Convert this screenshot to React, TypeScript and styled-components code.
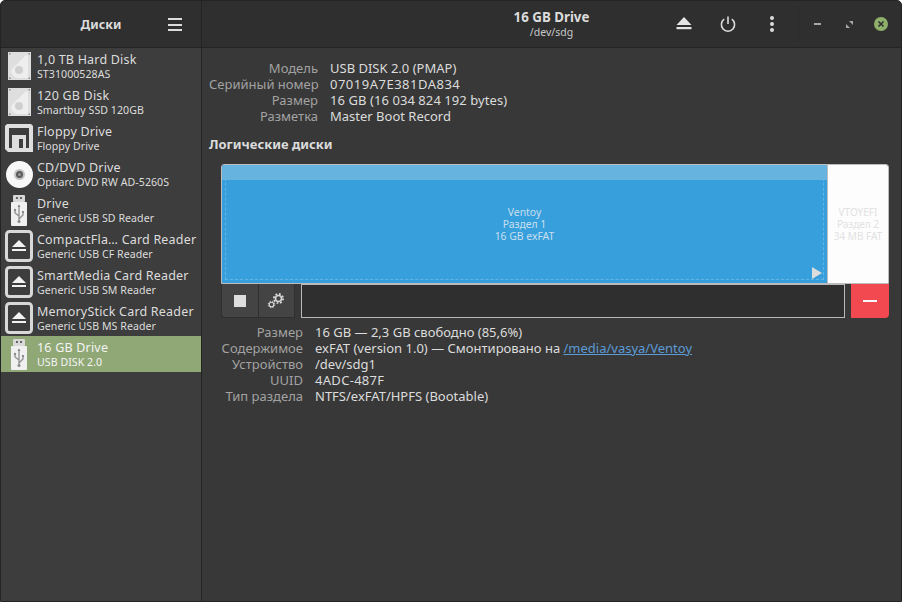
import React from "react";
import styled, { createGlobalStyle } from "styled-components";

const Global = createGlobalStyle`
  html, body { margin: 0; padding: 0; background: #ffffff; }
  #root { width: 902px; height: 602px; overflow: hidden; }
`;

const Win = styled.div`
  width: 902px; height: 602px; box-sizing: border-box;
  border: 1px solid #242424; border-radius: 5px 5px 0 0; overflow: hidden;
  display: grid; grid-template-columns: 201px 1fr; grid-template-rows: 47px 1fr;
  font-family: "Noto Sans", sans-serif; font-size: 13px; color: #dcdcdc; background: #383838;
`;
const SideHead = styled.header`
  background: #2f2f2f; border-right: 1px solid #242424; border-bottom: 1px solid #242424;
  display: flex; align-items: center; position: relative; justify-content: center;
  font-weight: 700; color: #dcdcdc;
`;
const SideTitle = styled.span` font-size: 12.5px; `;
const Burger = styled.button`
  position: absolute; right: 19px; top: 17px; width: 14px; height: 13px; padding: 0; border: 0; background: none;
  display: flex; flex-direction: column; justify-content: space-between;
  & > i { display: block; height: 2px; background: #dcdcdc; }
`;
const MainHead = styled.header`
  background: #2f2f2f; border-bottom: 1px solid #242424;
  display: grid; grid-template-columns: 1fr auto; align-items: center;
`;
const TitleBox = styled.div` text-align: center; padding-left: 239px; `;
const Title = styled.div` font-weight: 700; font-size: 13.3px; line-height: 14px; color: #dcdcdc; `;
const Sub = styled.div` font-size: 10.5px; line-height: 14px; margin-top: 1px; color: #c8c8c8; `;
const Tools = styled.div` display: flex; align-items: center; height: 100%; padding-right: 4px; `;
const ToolBtn = styled.button`
  width: 44px; height: 46px; padding: 0; border: 0; background: none;
  display: flex; align-items: center; justify-content: center;
`;
const Sep = styled.div` width: 1px; height: 34px; background: #2a2a2a; margin: 0 2px 0 4px; `;
const WinBtn = styled.button`
  width: 32px; height: 46px; padding: 0; border: 0; background: none;
  display: flex; align-items: center; justify-content: center;
`;
const Side = styled.nav`
  background: #3d3d3d; border-right: 1px solid #242424;
`;
const Row = styled.div<{ $on?: boolean }>`
  height: 36px; display: flex; align-items: center; background: ${p => (p.$on ? "#8fa876" : "transparent")};
  color: ${p => (p.$on ? "#f4f4f4" : "#dcdcdc")};
`;
const IconSlot = styled.div`
  width: 36px; height: 36px; flex: none; display: flex; align-items: center; justify-content: center;
`;
const RowText = styled.div` line-height: 15px; white-space: nowrap; padding-top: 2px; `;
const RowName = styled.div` font-size: 12.5px; letter-spacing: 0.2px; `;
const RowSub = styled.div` font-size: 10.6px; letter-spacing: 0.05px; `;
const Main = styled.main` padding: 12px 12px 0 7px; min-width: 0; `;
const Info = styled.div<{ $col: number }>`
  display: grid; grid-template-columns: ${p => p.$col}px 1fr; column-gap: 12px; line-height: 16px;
`;
const Label = styled.div` text-align: right; color: #a2a2a2; white-space: nowrap; `;
const Value = styled.div<{ $track?: number }>`
  color: #dcdcdc; white-space: nowrap; letter-spacing: ${p => p.$track ?? 0}px;
`;
const Link = styled.a` color: #5b9bd6; text-decoration: underline; `;
const Heading = styled.h2` font-size: 13px; font-weight: 700; margin: 12px 0 12px; line-height: 16px; color: #dcdcdc; `;
const Block = styled.section` margin-left: 12px; `;
const Bar = styled.div`
  height: 120px; display: flex; border: 1px solid #bdbdbd; border-radius: 3px 3px 0 0; box-sizing: border-box; overflow: hidden;
`;
const PartBlue = styled.div`
  flex: 1; position: relative; background: #379fdb; color: #c9dff0;
  display: flex; align-items: center; justify-content: center; text-align: center;
  border-right: 1px solid #bdbdbd; font-size: 10.4px; line-height: 12px;
`;
const Shine = styled.div` position: absolute; left: 0; right: 0; top: 0; height: 15px; background: #66b3df; `;
const Dashed = styled.div`
  position: absolute; left: 3px; right: 3px; top: 3px; bottom: 3px; border: 1px dashed #64b4e2;
`;
const Tri = styled.div`
  position: absolute; right: 5px; bottom: 4px; width: 0; height: 0;
  border-left: 10px solid #dcdcdc; border-top: 6px solid transparent; border-bottom: 6px solid transparent;
`;
const PartLabel = styled.span` position: relative; `;
const PartWhite = styled.div`
  width: 60px; background: #fdfdfd; color: #e2e2e2; display: flex; align-items: center; justify-content: center;
  text-align: center; font-size: 10px; line-height: 12px;
`;
const Toolbar = styled.div` display: flex; height: 34px; `;
const Group = styled.div` display: flex; width: 74px; background: #444444; border-radius: 0 0 0 4px; border: solid #2f2f2f; border-width: 0 0 1px 1px; box-sizing: border-box; `;
const GBtn = styled.button`
  flex: 1; padding: 0; border: 0; border-right: 1px solid #2f2f2f; background: none;
  display: flex; align-items: center; justify-content: center;
`;
const Field = styled.div` flex: 1; margin-left: 6px; background: #2f2f2f; border: 1px solid #b8b8b8; box-sizing: border-box; `;
const Danger = styled.button`
  width: 38px; margin-left: 6px; padding: 0; border: 0; background: #f2484f; border-radius: 0 0 4px 0;
  display: flex; align-items: center; justify-content: center;
  & > i { display: block; width: 14px; height: 2px; background: #f8f8f8; }
`;
const Details = styled.div` margin-top: 6px; `;

const Disk = () => (
  <svg width="23" height="28" viewBox="0 0 23 28">
    <rect width="23" height="28" fill="#dedede" />
    <path d="M4 17L18 3C19 3 20 3.500 20 5V26H10C6 26 3 22 3 19Z" fill="#eeeeee" />
    <circle cx="11" cy="18" r="4" fill="#d0d0d0" />
    <g fill="#8e8e8e"><rect x="1" y="1" width="1.500" height="1.500" /><rect x="20.500" y="1" width="1.500" height="1.500" /><rect x="1" y="25.500" width="1.500" height="1.500" /><rect x="20.500" y="25.500" width="1.500" height="1.500" /></g>
  </svg>
);
const Floppy = () => (
  <svg width="28" height="28" viewBox="0 0 28 28">
    <path d="M2 0H26L28 2V28H3L0 25V2Z" fill="#dedede" />
    <rect x="4" y="4" width="20" height="20" fill="#3d3d3d" />
    <rect x="7" y="11" width="14" height="17" fill="#dedede" />
    <rect x="14" y="15" width="4" height="9" fill="#3d3d3d" />
  </svg>
);
const Cd = () => (
  <svg width="27" height="27" viewBox="0 0 27 27">
    <circle cx="13.500" cy="13.500" r="13.500" fill="#f8f8f8" />
    <circle cx="13.500" cy="13.500" r="5.500" fill="#c4c4c4" />
    <circle cx="13.500" cy="13.500" r="3.500" fill="#5a5a5a" />
    <circle cx="13.500" cy="13.500" r="1.500" fill="#9a9a9a" />
  </svg>
);
const Usb = () => (
  <svg width="16" height="31" viewBox="0 0 16 31">
    <rect x="2" y="0" width="12" height="7" rx="1" fill="#d8d8d8" />
    <rect x="5" y="2" width="2" height="2" fill="#666" /><rect x="9" y="2" width="2" height="2" fill="#666" />
    <rect x="0" y="7" width="16" height="24" rx="1" fill="#f0f0f0" />
    <path d="M8 10V27M8 21L4 18V16M8 24L12 20V18" stroke="#8a8a8a" strokeWidth="1.200" fill="none" />
    <circle cx="8" cy="26.500" r="1.500" fill="#8a8a8a" /><path d="M6.500 12L8 9.500L9.500 12Z" fill="#8a8a8a" />
    <circle cx="4" cy="15" r="1.200" fill="#8a8a8a" /><rect x="11" y="16" width="2" height="2" fill="#8a8a8a" />
  </svg>
);
const Media = () => (
  <svg width="28" height="32" viewBox="0 0 28 32">
    <rect x="1.500" y="1.500" width="25" height="29" rx="3" fill="#3d3d3d" stroke="#d8d8d8" strokeWidth="3" />
    <path d="M14 10L21 17H7Z" fill="#f2f2f2" />
    <rect x="7" y="19" width="14" height="2" fill="#f2f2f2" />
  </svg>
);

const rows: { n: string; s: string; i: React.ReactNode; on?: boolean }[] = [
  { n: "1,0 TB Hard Disk", s: "ST31000528AS", i: <Disk /> },
  { n: "120 GB Disk", s: "Smartbuy SSD 120GB", i: <Disk /> },
  { n: "Floppy Drive", s: "Floppy Drive", i: <Floppy /> },
  { n: "CD/DVD Drive", s: "Optiarc DVD RW AD-5260S", i: <Cd /> },
  { n: "Drive", s: "Generic USB SD Reader", i: <Usb /> },
  { n: "CompactFla… Card Reader", s: "Generic USB CF Reader", i: <Media /> },
  { n: "SmartMedia Card Reader", s: "Generic USB SM Reader", i: <Media /> },
  { n: "MemoryStick Card Reader", s: "Generic USB MS Reader", i: <Media /> },
  { n: "16 GB Drive", s: "USB DISK 2.0", i: <Usb />, on: true },
];

export default function App() {
  return (
    <Win>
      <Global />
      <SideHead>
        <SideTitle>Диски</SideTitle>
        <Burger aria-label="menu"><i /><i /><i /></Burger>
      </SideHead>
      <MainHead>
        <TitleBox>
          <Title>16 GB Drive</Title>
          <Sub>/dev/sdg</Sub>
        </TitleBox>
        <Tools>
          <ToolBtn aria-label="eject">
            <svg width="16" height="14" viewBox="0 0 16 14"><path d="M8 0L15.500 8H.5Z" fill="#e4e4e4" /><rect x="0.500" y="10" width="15" height="2.200" fill="#e4e4e4" /></svg>
          </ToolBtn>
          <ToolBtn aria-label="power">
            <svg width="16" height="16" viewBox="0 0 16 16" fill="none" stroke="#dcdcdc" strokeWidth="1.600"><path d="M4.200 3.200A6.600 6.600 0 1 0 11.800 3.200" /><path d="M8 0.500V8" /></svg>
          </ToolBtn>
          <ToolBtn aria-label="more">
            <svg width="4" height="16" viewBox="0 0 4 16" fill="#dcdcdc"><circle cx="2" cy="2" r="2" /><circle cx="2" cy="8" r="2" /><circle cx="2" cy="14" r="2" /></svg>
          </ToolBtn>
          <Sep />
          <WinBtn aria-label="minimize">
            <svg width="7" height="2" viewBox="0 0 7 2"><rect width="7" height="2" fill="#a8a8a8" /></svg>
          </WinBtn>
          <WinBtn aria-label="maximize">
            <svg width="7" height="7" viewBox="0 0 7 7" fill="#a8a8a8"><path d="M3 0H7V4Z" /><path d="M0 3L4 7H0Z" /></svg>
          </WinBtn>
          <WinBtn aria-label="close">
            <svg width="14" height="14" viewBox="0 0 14 14"><circle cx="7" cy="7" r="7" fill="#8fb06a" /><path d="M4.500 4.500L9.500 9.500M9.500 4.500L4.500 9.500" stroke="#2f2f2f" strokeWidth="1.600" /></svg>
          </WinBtn>
        </Tools>
      </MainHead>
      <Side>
        {rows.map(r => (
          <Row key={r.n} $on={r.on}>
            <IconSlot>{r.i}</IconSlot>
            <RowText>
              <RowName>{r.n}</RowName>
              <RowSub>{r.s}</RowSub>
            </RowText>
          </Row>
        ))}
      </Side>
      <Main>
        <Info $col={109}>
          <Label>Модель</Label><Value>USB DISK 2.0 (PMAP)</Value>
          <Label>Серийный номер</Label><Value $track={0.5}>07019A7E381DA834</Value>
          <Label>Размер</Label><Value $track={0.07}>16 GB (16 034 824 192 bytes)</Value>
          <Label>Разметка</Label><Value>Master Boot Record</Value>
        </Info>
        <Heading>Логические диски</Heading>
        <Block>
          <Bar>
            <PartBlue>
              <Shine />
              <Dashed />
              <Tri />
              <PartLabel>Ventoy<br />Раздел 1<br />16 GB exFAT</PartLabel>
            </PartBlue>
            <PartWhite><PartLabel>VTOYEFI<br />Раздел 2<br />34 MB FAT</PartLabel></PartWhite>
          </Bar>
          <Toolbar>
            <Group>
              <GBtn aria-label="stop">
                <svg width="12" height="12" viewBox="0 0 12 12"><rect width="12" height="12" fill="#dedede" /></svg>
              </GBtn>
              <GBtn aria-label="settings">
                <svg width="18" height="18" viewBox="0 0 18 18" fill="none" stroke="#d8d8d8">
                  <circle cx="11.500" cy="6.500" r="3" strokeWidth="1.600" />
                  <circle cx="11.500" cy="6.500" r="4.600" strokeWidth="1.800" strokeDasharray="1.800 1.800" />
                  <circle cx="4.500" cy="12.500" r="2.300" strokeWidth="1.100" />
                  <circle cx="4.500" cy="12.500" r="3.300" strokeWidth="1" strokeDasharray="1.300 1.300" />
                </svg>
              </GBtn>
            </Group>
            <Field />
            <Danger aria-label="remove"><i /></Danger>
          </Toolbar>
          <Details>
            <Info $col={82}>
              <Label>Размер</Label><Value>16 GB — 2,3 GB свободно (85,6%)</Value>
              <Label>Содержимое</Label><Value>exFAT (version 1.0) — Смонтировано на <Link>/media/vasya/Ventoy</Link></Value>
              <Label>Устройство</Label><Value>/dev/sdg1</Value>
              <Label>UUID</Label><Value $track={0.3}>4ADC-487F</Value>
              <Label>Тип раздела</Label><Value>NTFS/exFAT/HPFS (Bootable)</Value>
            </Info>
          </Details>
        </Block>
      </Main>
    </Win>
  );
}
